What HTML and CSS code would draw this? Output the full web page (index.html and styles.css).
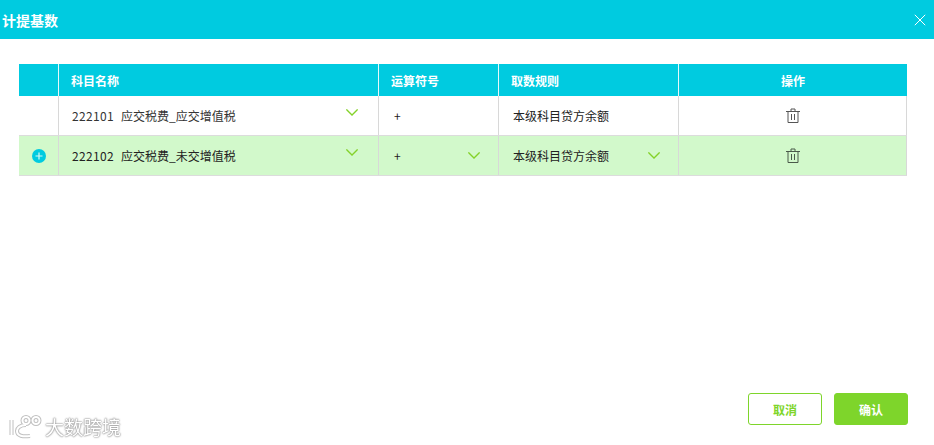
FILE: index.html
```html
<!DOCTYPE html>
<html lang="zh">
<head>
<meta charset="utf-8">
<title>计提基数</title>
<link rel="stylesheet" href="styles.css">
</head>
<body>
<div class="dialog">
  <header class="titlebar">
    <span class="title">计提基数</span>
    <svg class="close" width="12" height="12" viewBox="0 0 12 12"><path d="M.8.8l10.400 10.400M11.200.8L.8 11.200" stroke="#fff" stroke-width="1" fill="none"/></svg>
  </header>
  <main class="content">
    <div class="table">
      <div class="row head">
        <div class="cell"></div>
        <div class="cell">科目名称</div>
        <div class="cell">运算符号</div>
        <div class="cell">取数规则</div>
        <div class="cell center">操作</div>
      </div>
      <div class="row">
        <div class="cell"></div>
        <div class="cell sel"><span class="num">222101</span><span class="code">应交税费_应交增值税</span>
          <svg class="chev up" width="12" height="7" viewBox="0 0 12 7"><path d="M.4.4L6 6l5.600-5.600" fill="none" stroke="#84d22a" stroke-width="1.300"/></svg></div>
        <div class="cell op">+</div>
        <div class="cell rule">本级科目贷方余额</div>
        <div class="cell center">
          <svg class="trash" width="14" height="15" viewBox="0 0 14 15"><path d="M0 3.500h14M5 3.500V1h4v2.500M2 3.500V14.500h10V3.500M5.500 6v6M8.500 6v6" fill="none" stroke="#555" stroke-width="1"/></svg>
        </div>
      </div>
      <div class="row active">
        <div class="cell center">
          <svg class="plus" width="14" height="14" viewBox="0 0 14 14"><circle cx="7" cy="7" r="7" fill="#00cbe0"/><path d="M3.500 7h7M7 3.500v7" stroke="#d6f8f4" stroke-width="1.200"/></svg>
        </div>
        <div class="cell sel"><span class="num">222102</span><span class="code">应交税费_未交增值税</span>
          <svg class="chev up" width="12" height="7" viewBox="0 0 12 7"><path d="M.4.4L6 6l5.600-5.600" fill="none" stroke="#84d22a" stroke-width="1.300"/></svg></div>
        <div class="cell op sel2">+
          <svg class="chev" width="12" height="7" viewBox="0 0 12 7"><path d="M.4.4L6 6l5.600-5.600" fill="none" stroke="#84d22a" stroke-width="1.300"/></svg></div>
        <div class="cell rule sel2">本级科目贷方余额
          <svg class="chev" width="12" height="7" viewBox="0 0 12 7"><path d="M.4.4L6 6l5.600-5.600" fill="none" stroke="#84d22a" stroke-width="1.300"/></svg></div>
        <div class="cell center">
          <svg class="trash" width="14" height="15" viewBox="0 0 14 15"><path d="M0 3.500h14M5 3.500V1h4v2.500M2 3.500V14.500h10V3.500M5.500 6v6M8.500 6v6" fill="none" stroke="#4a5a4a" stroke-width="1"/></svg>
        </div>
      </div>
    </div>
  </main>
  <footer class="actions">
    <button class="btn ghost">取消</button>
    <button class="btn solid">确认</button>
  </footer>
  <div class="watermark">
    <svg width="38" height="24" viewBox="0 0 38 24">
      <g class="wm-edge"><path d="M4.500 5v15M19 10c-6 0-9 3-9 6 0 5 6 6 13 5"/><circle cx="19" cy="5.500" r="3.500"/><circle cx="29" cy="5.500" r="3.500"/></g>
      <g class="wm-fill"><path d="M4.500 5v15M19 10c-6 0-9 3-9 6 0 5 6 6 13 5"/><circle cx="19" cy="5.500" r="3.500"/><circle cx="29" cy="5.500" r="3.500"/></g>
    </svg>
    <span>大数跨境</span>
  </div>
</div>
</body>
</html>
```
FILE: styles.css
```css
* { box-sizing: border-box; }
html, body { margin: 0; padding: 0; height: 100%; }
body {
  background: #fff;
  font-family: "Noto Sans CJK SC", "Noto Sans", sans-serif;
  font-size: 12px;
  color: #222;
  overflow: hidden;
}
.dialog {
  position: relative;
  width: 934px;
  height: 445px;
  display: flex;
  flex-direction: column;
}
.titlebar {
  height: 39px;
  flex: none;
  background: #00cbe0;
  display: flex;
  align-items: center;
  justify-content: space-between;
  padding: 0 8px 0 2px;
  color: #fff;
}
.title { font-size: 14px; font-weight: 700; line-height: 38px; }
.close { display: block; margin-top: 1px; }
.content { flex: 1; padding: 25px 27px 0 19px; }
.table { width: 888px; }
.row {
  display: grid;
  grid-template-columns: 40px 320px 120px 180px 228px;
  height: 40px;
  border-bottom: 1px solid #dcdcdc;
}
.row.head {
  height: 32px;
  background: #00cbe0;
  color: #fff;
  font-weight: 700;
  border-bottom: 0;
}
.row.active { background: #d2f9cb; }
.cell {
  display: flex;
  align-items: center;
  padding-left: 12px;
  border-right: 1px solid #d8d8d8;
  position: relative;
  min-width: 0;
}
.row.head .cell { border-right-color: #e6f9fb; }
.row.head .cell:last-child { border-right: 0; }
.cell.center { justify-content: center; padding-left: 0; }
.sel { padding-left: 13px; }
.op { padding-left: 15px; }
.rule { padding-left: 14px; }
.num { letter-spacing: .35px; margin-right: 7px; color: #333; }
.code { color: #333; }
.row.active .code, .row.active .num { color: #222; }
.chev { position: absolute; right: 18px; top: 16px; }
.chev.up { top: 13px; right: 20px; }
.trash { display: block; margin-top: -1px; }
.plus { display: block; }
.actions {
  flex: none;
  display: flex;
  justify-content: flex-end;
  gap: 12px;
  padding: 0 26px 20px 0;
}
.btn {
  width: 74px;
  height: 32px;
  border-radius: 3px;
  font-family: inherit;
  font-size: 12px;
  font-weight: 700;
  padding: 0;
}
.ghost { background: #fff; border: 1px solid #7ed52b; color: #7ed52b; }
.solid { background: #7ed52b; border: 1px solid #7ed52b; color: #fff; }
.watermark {
  position: absolute;
  left: 7px;
  bottom: 6px;
  display: flex;
  align-items: center;
  color: #fff;
  font-size: 19px;
  line-height: 24px;
  text-shadow: 0 0 1px #888, 0 0 2px #999, 0 0 2px #aaa;
  filter: blur(.4px);
}
.wm-edge { fill: none; stroke: #c0c0c0; stroke-width: 4; }
.wm-fill { fill: none; stroke: #fff; stroke-width: 2; }
```
